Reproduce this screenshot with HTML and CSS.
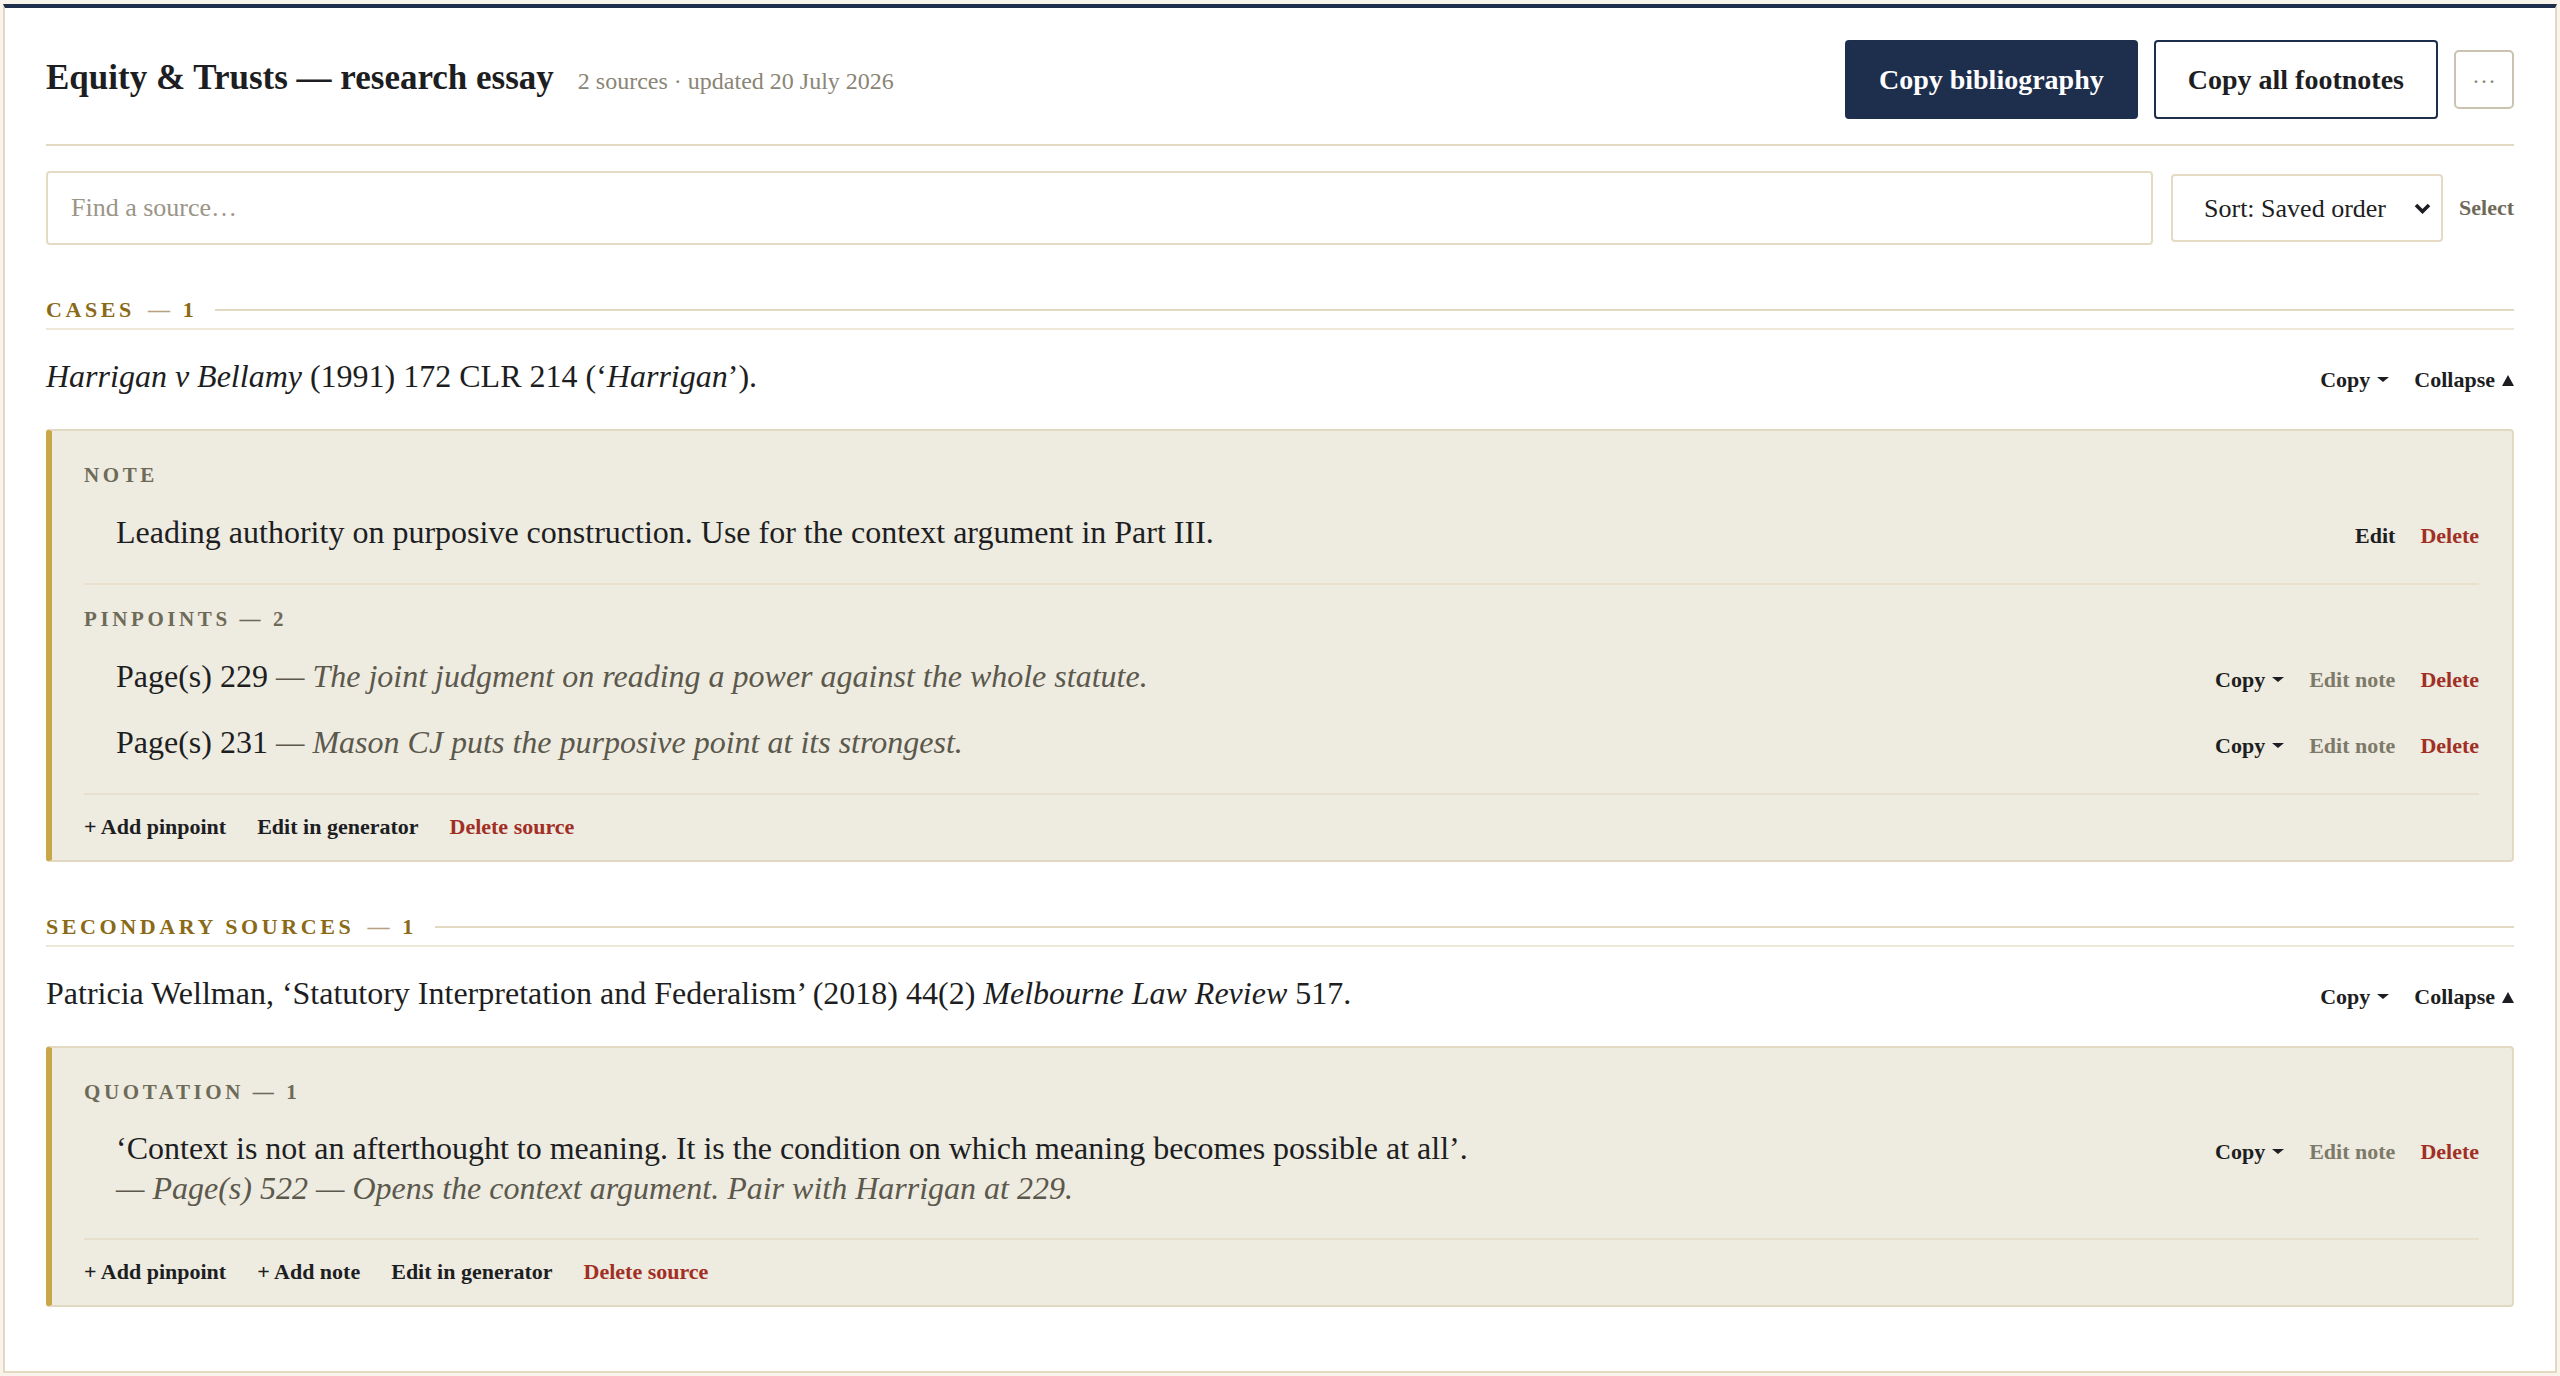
FILE: index.html
```html
<!DOCTYPE html>
<html lang="en">
<head>
<meta charset="UTF-8">
<meta name="viewport" content="width=device-width, initial-scale=1.0">
<title>Equity &amp; Trusts — research essay</title>
<link rel="stylesheet" href="styles.css">
</head>
<body>
<div class="sheet">
  <header class="top">
    <div class="heading">
      <h1>Equity &amp; Trusts — research essay</h1>
      <span class="meta">2 sources · updated 20 July 2026</span>
    </div>
    <div class="top-actions">
      <button class="btn btn-primary">Copy bibliography</button>
      <button class="btn btn-outline">Copy all footnotes</button>
      <button class="btn-more" title="More">…</button>
    </div>
  </header>

  <div class="toolbar">
    <input class="search" type="text" placeholder="Find a source…">
    <label class="sort">
      <select>
        <option>Sort: Saved order</option>
        <option>Sort: Author</option>
        <option>Sort: Year</option>
      </select>
      <svg class="chev" width="17" height="11" viewBox="0 0 17 11"><path d="M2 2l6.5 6.5L15 2" fill="none" stroke="#1d1e22" stroke-width="3.6"/></svg>
    </label>
    <button class="link link-muted">Select</button>
  </div>

  <section class="group">
    <div class="group-head">
      <h2>Cases <span class="count"><span class="dash">—</span> 1</span></h2>
      <span class="rule"></span>
    </div>

    <article class="source">
      <div class="cite-row">
        <p class="cite"><i>Harrigan v Bellamy</i> (1991) 172 CLR 214 (‘<i>Harrigan</i>’).</p>
        <div class="actions">
          <button class="link caret-down">Copy</button>
          <button class="link caret-up">Collapse</button>
        </div>
      </div>

      <div class="panel">
        <div class="block">
          <div class="panel-label">Note</div>
          <div class="item">
            <p>Leading authority on purposive construction. Use for the context argument in Part III.</p>
            <div class="actions">
              <button class="link">Edit</button>
              <button class="link link-danger">Delete</button>
            </div>
          </div>
        </div>

        <div class="block">
          <div class="panel-label">Pinpoints — 2</div>
          <div class="item">
            <p>Page(s) 229 <span class="aside">— The joint judgment on reading a power against the whole statute.</span></p>
            <div class="actions">
              <button class="link caret-down">Copy</button>
              <button class="link link-muted">Edit note</button>
              <button class="link link-danger">Delete</button>
            </div>
          </div>
          <div class="item">
            <p>Page(s) 231 <span class="aside">— Mason CJ puts the purposive point at its strongest.</span></p>
            <div class="actions">
              <button class="link caret-down">Copy</button>
              <button class="link link-muted">Edit note</button>
              <button class="link link-danger">Delete</button>
            </div>
          </div>
        </div>

        <div class="panel-foot">
          <button class="link">+ Add pinpoint</button>
          <button class="link">Edit in generator</button>
          <button class="link link-danger">Delete source</button>
        </div>
      </div>
    </article>
  </section>

  <section class="group">
    <div class="group-head">
      <h2>Secondary sources <span class="count"><span class="dash">—</span> 1</span></h2>
      <span class="rule"></span>
    </div>

    <article class="source">
      <div class="cite-row">
        <p class="cite">Patricia Wellman, ‘Statutory Interpretation and Federalism’ (2018) 44(2) <i>Melbourne Law Review</i> 517.</p>
        <div class="actions">
          <button class="link caret-down">Copy</button>
          <button class="link caret-up">Collapse</button>
        </div>
      </div>

      <div class="panel">
        <div class="block">
          <div class="panel-label">Quotation — 1</div>
          <div class="item quote">
            <p>‘Context is not an afterthought to meaning. It is the condition on which meaning becomes possible at all’.<br>
              <span class="aside">— Page(s) 522 — Opens the context argument. Pair with Harrigan at 229.</span></p>
            <div class="actions">
              <button class="link caret-down">Copy</button>
              <button class="link link-muted">Edit note</button>
              <button class="link link-danger">Delete</button>
            </div>
          </div>
        </div>

        <div class="panel-foot">
          <button class="link">+ Add pinpoint</button>
          <button class="link">+ Add note</button>
          <button class="link">Edit in generator</button>
          <button class="link link-danger">Delete source</button>
        </div>
      </div>
    </article>
  </section>
</div>
</body>
</html>
```

FILE: styles.css
```css
body {
  font-family: "Liberation Serif", "Times New Roman", serif;
  color: #1d1e22;
  margin: 0;
  padding: 4px 3px;
  background-color: #f8f4ec;
}

p {
  margin: 0;
}

button {
  font-family: inherit;
  cursor: pointer;
}

.sheet {
  background: #fff;
  border: 2px solid #e3d9c3;
  border-top: 4px solid #1e2e4d;
  padding: 32px 41px 64px;
}

/* header */
.top {
  display: flex;
  justify-content: space-between;
  align-items: center;
  padding-bottom: 25px;
  border-bottom: 2px solid #e3d9c3;
}

.heading {
  display: flex;
  align-items: baseline;
  gap: 24px;
  padding-bottom: 3px;
}

h1 {
  margin: 0;
  font-size: 35px;
  font-weight: bold;
}

.meta {
  font-size: 24px;
  color: #8a8576;
}

.top-actions {
  display: flex;
  align-items: center;
  gap: 16px;
}

.btn {
  height: 79px;
  padding: 0 32px;
  font-size: 28px;
  font-weight: bold;
  border-radius: 4px;
  border: 2px solid #1e2e4d;
}

.btn-primary {
  background: #1e2e4d;
  color: #fff;
}

.btn-outline {
  background: #fff;
  color: #1d1e22;
}

.btn-more {
  width: 60px;
  height: 59px;
  background: #fff;
  border: 2px solid #cbc3b1;
  border-radius: 5px;
  color: #8d8879;
  font-size: 24px;
  padding: 0 0 8px;
}

/* search + sort */
.toolbar {
  display: flex;
  align-items: center;
  gap: 16px;
  margin-top: 25px;
}

.search {
  flex: 1;
  height: 74px;
  box-sizing: border-box;
  margin-right: 2px;
  padding: 0 23px;
  border: 2px solid #e5dbc4;
  border-radius: 4px;
  font-family: inherit;
  font-size: 26px;
  color: #1d1e22;
  outline: none;
}

.search::placeholder {
  color: #9a9587;
}

.sort {
  display: flex;
  align-items: center;
  box-sizing: border-box;
  width: 272px;
  height: 68px;
  padding: 0 10px 0 31px;
  border: 2px solid #e5dbc4;
  border-radius: 4px;
  background: #fff;
}

.sort select {
  flex: 1;
  appearance: none;
  border: none;
  background: transparent;
  padding: 0;
  font-family: inherit;
  font-size: 26px;
  color: #1d1e22;
  outline: none;
}

.chev {
  display: block;
}

/* text links */
.link {
  background: none;
  border: none;
  padding: 0;
  font-size: 22px;
  font-weight: bold;
  color: #1d1e22;
  line-height: 26px;
  white-space: nowrap;
}

.link-muted {
  color: #6e6a57;
}

.actions .link-muted {
  color: #7e7a69;
}

.link-danger {
  color: #a12f25;
}

.caret-down::after {
  content: "";
  display: inline-block;
  margin-left: 7px;
  vertical-align: 5px;
  border-left: 6px solid transparent;
  border-right: 6px solid transparent;
  border-top: 5px solid currentColor;
}

.caret-up::after {
  content: "";
  display: inline-block;
  margin-left: 7px;
  vertical-align: 1px;
  border-left: 6px solid transparent;
  border-right: 6px solid transparent;
  border-bottom: 11px solid currentColor;
}

/* groups */
.group {
  margin-top: 53px;
}

.group-head {
  display: flex;
  align-items: center;
  gap: 18px;
  padding-bottom: 6px;
  border-bottom: 2px solid #efe8d8;
}

.group-head h2 {
  margin: 0;
  font-size: 22px;
  line-height: 24px;
  letter-spacing: 3.6px;
  text-transform: uppercase;
  color: #8a6a17;
}

.count {
  margin-left: 4px;
}

.dash {
  color: #b8a083;
}

.rule {
  flex: 1;
  height: 2px;
  background: #e3d9c3;
}

.cite-row {
  display: flex;
  justify-content: space-between;
  align-items: baseline;
  padding: 25px 0 32px;
}

.cite {
  font-size: 32px;
  line-height: 42px;
}

.actions {
  display: flex;
  align-items: baseline;
  gap: 25px;
}

/* note / pinpoint panel */
.panel {
  background: #eeebe1;
  border: 2px solid #e3d9c3;
  border-left: 6px solid #c9a648;
  border-radius: 4px;
  padding: 32px 33px 20px 32px;
}

.block {
  padding-bottom: 30px;
  border-bottom: 2px solid #e8e0cc;
}

.block + .block {
  margin-top: 22px;
}

.panel-label {
  font-size: 21px;
  line-height: 24px;
  font-weight: bold;
  letter-spacing: 3.6px;
  text-transform: uppercase;
  color: #6d6a58;
  margin-bottom: 24px;
}

.item {
  display: flex;
  justify-content: space-between;
  align-items: baseline;
  padding-left: 32px;
}

.item + .item {
  margin-top: 24px;
}

.item p {
  font-size: 32px;
  line-height: 42px;
}

.item.quote p {
  line-height: 40px;
}

.aside {
  font-style: italic;
  color: #5b584c;
}

.panel-foot {
  display: flex;
  gap: 31px;
  padding-top: 19px;
}
```
